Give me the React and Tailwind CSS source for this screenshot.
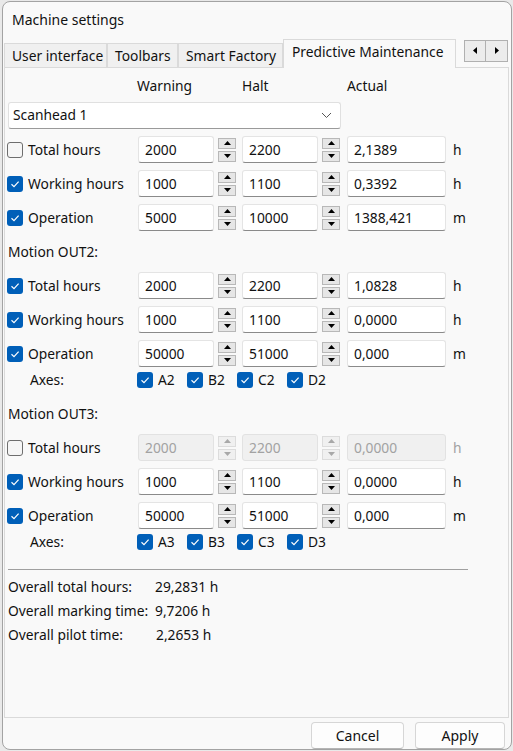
import React from 'react';

const rows1 = [
    { label: 'Total hours', checked: false, warn: '2000', halt: '2200', actual: '2,1389', unit: 'h' },
    { label: 'Working hours', checked: true, warn: '1000', halt: '1100', actual: '0,3392', unit: 'h' },
    { label: 'Operation', checked: true, warn: '5000', halt: '10000', actual: '1388,421', unit: 'm' },
];

const rows2 = [
    { label: 'Total hours', checked: true, warn: '2000', halt: '2200', actual: '1,0828', unit: 'h' },
    { label: 'Working hours', checked: true, warn: '1000', halt: '1100', actual: '0,0000', unit: 'h' },
    { label: 'Operation', checked: true, warn: '50000', halt: '51000', actual: '0,000', unit: 'm' },
];

const rows3 = [
    { label: 'Total hours', checked: false, warn: '2000', halt: '2200', actual: '0,0000', unit: 'h', disabled: true },
    { label: 'Working hours', checked: true, warn: '1000', halt: '1100', actual: '0,0000', unit: 'h' },
    { label: 'Operation', checked: true, warn: '50000', halt: '51000', actual: '0,000', unit: 'm' },
];

function Check({ checked }) {
    if (!checked) {
        return <span className="w-[16px] h-[16px] shrink-0 rounded-[3px] border border-[#6e6e6e] bg-[#f6f6f6]" />;
    }
    return (
        <span className="w-[16px] h-[16px] shrink-0 rounded-[3px] bg-[#005fb8] flex items-center justify-center">
            <svg width="12" height="12" viewBox="0 0 12 12">
                <polyline points="2.5,6.3 5,8.6 9.6,3.6" fill="none" stroke="white" strokeWidth="1.2" />
            </svg>
        </span>
    );
}

function Spin({ disabled }) {
    const fill = disabled ? '#a8a8a8' : '#000';
    const btn = disabled
        ? 'w-[18px] h-[11px] border border-[#dcdcdc] bg-[#f0f0f0] flex items-center justify-center'
        : 'w-[18px] h-[11px] border border-[#b8b8b8] bg-[#e6e6e6] flex items-center justify-center';
    return (
        <div className="flex flex-col gap-[2px] w-[18px]">
            <div className={btn}>
                <svg width="7" height="4" viewBox="0 0 7 4"><polygon points="0,4 7,4 3.5,0" fill={fill} /></svg>
            </div>
            <div className={btn}>
                <svg width="7" height="4" viewBox="0 0 7 4"><polygon points="0,0 7,0 3.5,4" fill={fill} /></svg>
            </div>
        </div>
    );
}

function Field({ value, wide, disabled }) {
    const w = wide ? 'w-[99px]' : 'w-[76px]';
    if (disabled) {
        return (
            <div className={`${w} h-[27px] rounded-[3px] border border-[#e2e2e2] bg-[#f0f0f0] pl-[6px] flex items-center text-[#a2a2a2]`}>
                {value}
            </div>
        );
    }
    return (
        <div className={`${w} h-[27px] rounded-[3px] border border-[#e4e4e4] border-b-[#8a8a8a] bg-white pl-[6px] flex items-center`}>
            {value}
        </div>
    );
}

function Row({ r }) {
    return (
        <div className="flex items-center h-[34px]">
            <div className="w-[131px] flex items-center gap-[5px]">
                <Check checked={r.checked} />
                <span>{r.label}</span>
            </div>
            <Field value={r.warn} disabled={r.disabled} />
            <div className="ml-[4px]"><Spin disabled={r.disabled} /></div>
            <div className="ml-[6px]"><Field value={r.halt} disabled={r.disabled} /></div>
            <div className="ml-[4px]"><Spin disabled={r.disabled} /></div>
            <div className="ml-[7px]"><Field value={r.actual} wide disabled={r.disabled} /></div>
            <span className={`ml-[7px] ${r.disabled ? 'text-[#a2a2a2]' : ''}`}>{r.unit}</span>
        </div>
    );
}

function Axes({ names }) {
    return (
        <div className="flex items-center h-[18px]">
            <div className="w-[130px] pl-[23px]">Axes:</div>
            {names.map(n => (
                <div key={n} className="w-[50px] flex items-center gap-[5px]">
                    <Check checked />
                    <span>{n}</span>
                </div>
            ))}
        </div>
    );
}

export default function App() {
    const tabs = [
        { name: 'User interface', w: 'w-[103px]' },
        { name: 'Toolbars', w: 'w-[71px]' },
        { name: 'Smart Factory', w: 'w-[105px]' },
    ];

    return (
        <div className="w-[513px] h-[751px] bg-[#e9e9e9] pt-[1px] pl-[2px] text-[13.8px] text-[#111] font-['Segoe_UI','Noto_Sans',sans-serif]">
            <div className="w-[510px] h-[749px] border border-[#a3a3a3] rounded-[8px] bg-[#f9f9f9] flex flex-col overflow-hidden">

                {/* title */}
                <div className="h-[36px] pl-[9px] flex items-center text-[14px]">Machine settings</div>

                {/* tabs */}
                <div className="h-[29px] flex items-end pl-[1px]">
                    {tabs.map(t => (
                        <div key={t.name} className={`${t.w} h-[24px] border border-b-0 border-[#dadada] bg-[#f0f0f0] flex items-center pl-[7px] pt-[1px] whitespace-nowrap`}>
                            {t.name}
                        </div>
                    ))}
                    <div className="relative z-10 w-[173px] h-[29px] mb-[-1px] border border-b-0 border-[#dadada] bg-[#f9f9f9] flex items-center pl-[8px] pb-[4px] whitespace-nowrap">
                        Predictive Maintenance
                    </div>
                    <div className="self-start mt-[2px] ml-[8px] flex">
                        <div className="w-[22px] h-[22px] border border-[#b0b0b0] bg-[#ececec] flex items-center justify-center">
                            <svg width="4" height="7" viewBox="0 0 4 7"><polygon points="4,0 4,7 0,3.5" fill="#000" /></svg>
                        </div>
                        <div className="w-[22px] h-[22px] border border-l-0 border-[#b0b0b0] bg-[#ececec] flex items-center justify-center">
                            <svg width="4" height="7" viewBox="0 0 4 7"><polygon points="0,0 0,7 4,3.5" fill="#000" /></svg>
                        </div>
                    </div>
                </div>

                {/* panel */}
                <div className="ml-[1px] w-[505px] h-[652px] border border-[#dadada] bg-[#f9f9f9] pl-[2px] pt-[2px]">
                    <div className="flex items-center h-[32px]">
                        <div className="w-[130px]" />
                        <div className="w-[105px]">Warning</div>
                        <div className="w-[105px]">Halt</div>
                        <div>Actual</div>
                    </div>

                    <div className="ml-[1px] w-[333px] h-[27px] rounded-[3px] border border-[#e0e0e0] border-b-[#9a9a9a] bg-white pl-[4px] pr-[8px] flex items-center justify-between">
                        <span>Scanhead 1</span>
                        <svg width="11" height="7" viewBox="0 0 11 7">
                            <polyline points="1,1 5.5,5.5 10,1" fill="none" stroke="#555" strokeWidth="1" />
                        </svg>
                    </div>

                    <div className="mt-[4px]">
                        {rows1.map(r => <Row key={r.label} r={r} />)}
                    </div>

                    <div className="h-[34px] flex items-center pl-[1px]">Motion OUT2:</div>
                    {rows2.map(r => <Row key={r.label} r={r} />)}
                    <Axes names={['A2', 'B2', 'C2', 'D2']} />

                    <div className="mt-[8px] h-[34px] flex items-center pl-[1px]">Motion OUT3:</div>
                    {rows3.map(r => <Row key={r.label} r={r} />)}
                    <Axes names={['A3', 'B3', 'C3', 'D3']} />

                    <div className="mt-[18px] ml-[1px] w-[460px] h-px bg-[#a0a0a0]" />

                    <div className="mt-[5px] pl-[1px]">
                        <div className="h-[24px] flex items-center">
                            <span className="w-[147px]">Overall total hours:</span>
                            <span>29,2831 h</span>
                        </div>
                        <div className="h-[24px] flex items-center">
                            <span className="w-[147px] whitespace-nowrap">Overall marking time:</span>
                            <span>9,7206 h</span>
                        </div>
                        <div className="h-[24px] flex items-center">
                            <span className="w-[148px]">Overall pilot time:</span>
                            <span>2,2653 h</span>
                        </div>
                    </div>
                </div>

                {/* footer */}
                <div className="flex-1 flex justify-end items-start gap-[11px] pt-[4px] pr-[6px]">
                    <button className="w-[93px] h-[27px] rounded-[4px] border border-[#d6d6d6] border-b-[#b5b5b5] bg-[#fdfdfd] text-[14px]">Cancel</button>
                    <button className="w-[90px] h-[27px] rounded-[4px] border border-[#d6d6d6] border-b-[#b5b5b5] bg-[#fdfdfd] text-[14px]">Apply</button>
                </div>
            </div>
        </div>
    );
}
